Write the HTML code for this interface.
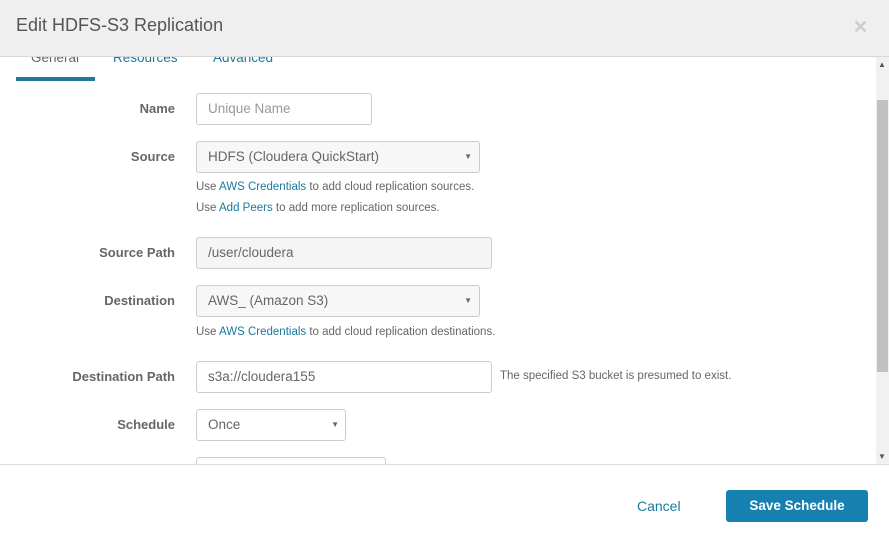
<!DOCTYPE html>
<html><head><meta charset="utf-8"><style>
*{box-sizing:border-box;margin:0;padding:0}
body{width:889px;height:538px;overflow:hidden;background:#fff;font-family:"Liberation Sans",sans-serif;position:relative;color:#333}
.hdr{position:absolute;left:0;top:0;width:889px;height:57px;background:#f0eff0;border-bottom:1px solid #d9d6d8;z-index:5}
.hdr h1{position:absolute;left:16px;top:15px;font-size:18px;font-weight:normal;color:#555}
.x{position:absolute;left:853px;top:17px;font-size:18px;color:#ccc;font-weight:bold}
.tab{position:absolute;top:50px;font-size:13.5px;color:#1a7a9e}
.ul{position:absolute;left:16px;top:77px;width:79px;height:4px;background:#1f7a99}
.lbl{position:absolute;right:714px;font-size:13px;font-weight:bold;color:#666;white-space:nowrap}
.in{position:absolute;left:196px;height:32px;border:1px solid #ccc;border-radius:3px;font-size:13.5px;color:#666;padding:7px 0 0 11px;background:#fff;white-space:nowrap}
.sel{background:#f7f7f7}
.sel::after{content:"\25BC";position:absolute;right:7px;top:10px;font-size:8px;color:#666}
.hint{position:absolute;left:196px;font-size:11.5px;color:#666;white-space:nowrap}
.hint a{color:#1a7a9e;text-decoration:none}
.sb{position:absolute;left:876px;top:57px;width:13px;height:407px;background:#f1f1f1}
.th{position:absolute;left:877px;top:100px;width:11px;height:272px;background:#c1c1c1}
.ar{position:absolute;left:878px;font-size:8px;color:#555}
.ft{position:absolute;left:0;top:464px;width:889px;height:74px;background:#fff;border-top:1px solid #ddd;z-index:5}
.cancel{position:absolute;left:637px;top:33px;font-size:14px;color:#1a7a9e}
.save{position:absolute;left:726px;top:25px;width:142px;height:32px;background:#1681b1;border-radius:3px;color:#fff;font-weight:bold;font-size:13.5px;text-align:center;line-height:32px}
</style></head><body>
<div class="hdr"><h1>Edit HDFS-S3 Replication</h1><div class="x">✕</div></div>
<div class="tab" style="left:31px;color:#666">General</div>
<div class="tab" style="left:113px">Resources</div>
<div class="tab" style="left:213px">Advanced</div>
<div class="ul"></div>

<div class="lbl" style="top:101px">Name</div>
<div class="in" style="top:93px;width:176px;color:#999">Unique Name</div>

<div class="lbl" style="top:149px">Source</div>
<div class="in sel" style="top:141px;width:284px">HDFS (Cloudera QuickStart)</div>
<div class="hint" style="top:181px">Use <a>AWS Credentials</a> to add cloud replication sources.</div>
<div class="hint" style="top:202px">Use <a>Add Peers</a> to add more replication sources.</div>

<div class="lbl" style="top:245px">Source Path</div>
<div class="in" style="top:237px;width:296px;background:#f5f5f5">/user/cloudera</div>

<div class="lbl" style="top:293px">Destination</div>
<div class="in sel" style="top:285px;width:284px">AWS_ (Amazon S3)</div>
<div class="hint" style="top:326px">Use <a>AWS Credentials</a> to add cloud replication destinations.</div>

<div class="lbl" style="top:369px">Destination Path</div>
<div class="in" style="top:361px;width:296px">s3a://cloudera155</div>
<div class="hint" style="left:500px;top:370px">The specified S3 bucket is presumed to exist.</div>

<div class="lbl" style="top:417px">Schedule</div>
<div class="in" style="top:409px;width:150px">Once<span style="position:absolute;right:6px;top:10px;font-size:8px">▼</span></div>
<div class="in" style="top:457px;width:190px"></div>

<div class="sb"></div><div class="th"></div>
<div class="ar" style="top:60px">▲</div><div class="ar" style="top:452px">▼</div>

<div class="ft"><div class="cancel">Cancel</div><div class="save">Save Schedule</div></div>
</body></html>
